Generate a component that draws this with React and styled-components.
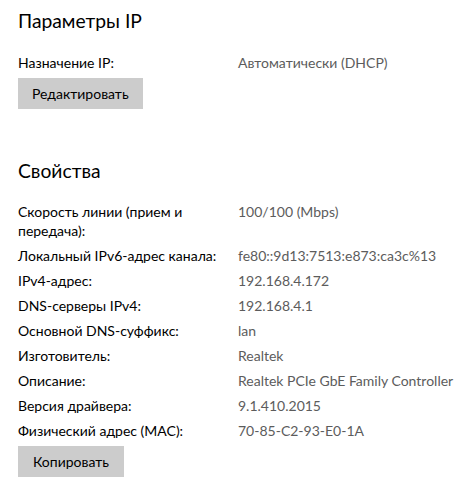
import React from "react";
import styled, { createGlobalStyle } from "styled-components";

const Global = createGlobalStyle`
  html, body { margin: 0; padding: 0; background: #ffffff; }
  body { font-family: "Lato", "Noto Sans", sans-serif; color: #000; }
`;

const Page = styled.div`
  width: 472px;
  height: 504px;
  box-sizing: border-box;
  padding: 6px 18px 0 18px;
  display: flex;
  flex-direction: column;
`;

const Section = styled.section`
  display: flex;
  flex-direction: column;
  margin-bottom: ${(p) => p.$gap || 0}px;
`;

const Heading = styled.h2`
  margin: 0 0 ${(p) => p.$mb}px 0;
  font-size: 19.3px;
  font-weight: 400;
  line-height: 30px;
  color: #000;
`;

const Grid = styled.div`
  display: grid;
  grid-template-columns: 220px 1fr;
`;

const Label = styled.div`
  font-size: 14px;
  line-height: 19px;
  padding: 3px 20px 3px 0;
  color: #000;
`;

const Value = styled.div`
  font-size: 14px;
  line-height: 19px;
  padding: 3px 0;
  color: #5c5c5c;
`;

const Button = styled.button`
  align-self: flex-start;
  margin-top: 3px;
  height: 31px;
  padding: 0 ${(p) => p.$pad}px;
  border: none;
  background: #cccccc;
  color: #000;
  font-family: inherit;
  font-size: 14px;
  cursor: pointer;
`;

const rows = [
  ["Скорость линии (прием и передача):", "100/100 (Mbps)"],
  ["Локальный IPv6-адрес канала:", "fe80::9d13:7513:e873:ca3c%13"],
  ["IPv4-адрес:", "192.168.4.172"],
  ["DNS-серверы IPv4:", "192.168.4.1"],
  ["Основной DNS-суффикс:", "lan"],
  ["Изготовитель:", "Realtek"],
  ["Описание:", "Realtek PCIe GbE Family Controller"],
  ["Версия драйвера:", "9.1.410.2015"],
  ["Физический адрес (MAC):", "70-85-C2-93-E0-1A"],
];

export default function App() {
  return (
    <>
      <Global />
      <Page>
        <Section $gap={47}>
          <Heading $mb={14}>Параметры IP</Heading>
          <Grid>
            <Label>Назначение IP:</Label>
            <Value>Автоматически (DHCP)</Value>
          </Grid>
          <Button $pad={14}>Редактировать</Button>
        </Section>
        <Section>
          <Heading $mb={13}>Свойства</Heading>
          <Grid>
            {rows.map(([l, v]) => (
              <React.Fragment key={l}>
                <Label>{l}</Label>
                <Value>{v}</Value>
              </React.Fragment>
            ))}
          </Grid>
          <Button $pad={15}>Копировать</Button>
        </Section>
      </Page>
    </>
  );
}
